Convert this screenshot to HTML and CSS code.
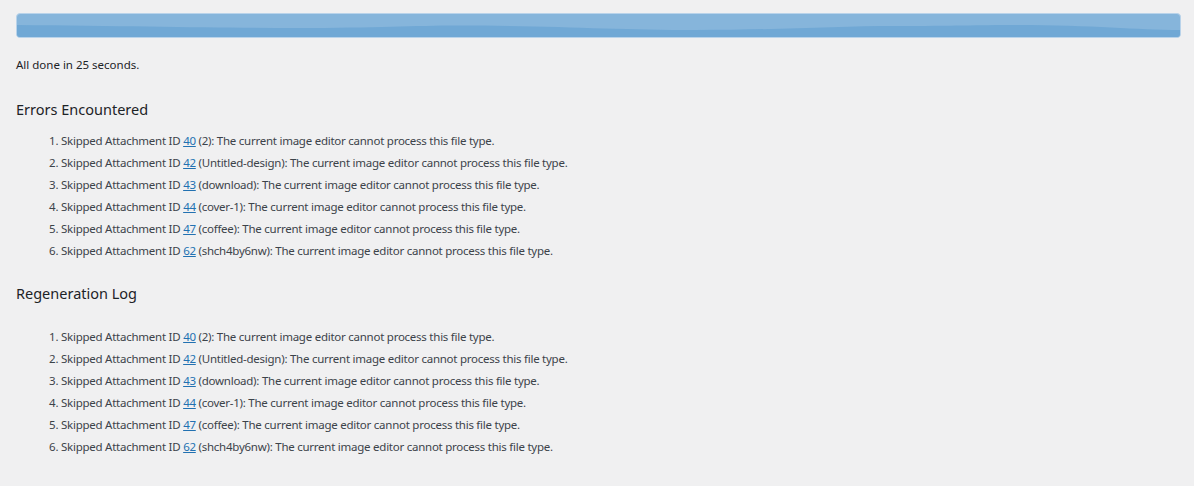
FILE: index.html
```html
<!DOCTYPE html>
<html lang="en">

<head>
    <meta charset="UTF-8">
    <meta name="viewport" content="width=device-width, initial-scale=1.0">
    <title>Regenerate Thumbnails</title>

    <link rel="stylesheet" href="styles.css">
</head>

<body>

    <div class="wrap">
        <div class="progressbar">
            <svg class="wave" viewBox="0 0 1165 23" preserveAspectRatio="none">
                <path d="M0,11 C120,12 200,14 280,14 C360,14 400,11.5 440,11.5 C540,11.5 600,16 680,16 C760,16 820,12 880,12 C940,12 960,11 1000,11 C1080,11 1120,16 1165,16 L1165,23 L0,23 Z" fill="#70a8d5" />
            </svg>
        </div>

        <p class="done">All done in 25 seconds.</p>

        <h2 class="title">Errors Encountered</h2>
        <ol class="log">
            <li>Skipped Attachment ID <a href="#">40</a> (2): The current image editor cannot process this file type.</li>
            <li>Skipped Attachment ID <a href="#">42</a> (Untitled-design): The current image editor cannot process this file type.</li>
            <li>Skipped Attachment ID <a href="#">43</a> (download): The current image editor cannot process this file type.</li>
            <li>Skipped Attachment ID <a href="#">44</a> (cover-1): The current image editor cannot process this file type.</li>
            <li>Skipped Attachment ID <a href="#">47</a> (coffee): The current image editor cannot process this file type.</li>
            <li>Skipped Attachment ID <a href="#">62</a> (shch4by6nw): The current image editor cannot process this file type.</li>
        </ol>

        <h2 class="title title-log">Regeneration Log</h2>
        <ol class="log log-full">
            <li>Skipped Attachment ID <a href="#">40</a> (2): The current image editor cannot process this file type.</li>
            <li>Skipped Attachment ID <a href="#">42</a> (Untitled-design): The current image editor cannot process this file type.</li>
            <li>Skipped Attachment ID <a href="#">43</a> (download): The current image editor cannot process this file type.</li>
            <li>Skipped Attachment ID <a href="#">44</a> (cover-1): The current image editor cannot process this file type.</li>
            <li>Skipped Attachment ID <a href="#">47</a> (coffee): The current image editor cannot process this file type.</li>
            <li>Skipped Attachment ID <a href="#">62</a> (shch4by6nw): The current image editor cannot process this file type.</li>
        </ol>
    </div>

</body>

</html>
```

FILE: styles.css
```css
body {
    margin: 0;
    background: #f0f0f1;
    color: #3c434a;
    font-family: "Noto Sans", "Open Sans", sans-serif;
    font-size: 11.5px;
    letter-spacing: -0.25px;
}

.wrap {
    padding: 13px 13px 0 16px;
}

.progressbar {
    position: relative;
    height: 23px;
    background: #86b5db;
    border: 1px solid #b9d3ea;
    border-radius: 4px;
    overflow: hidden;
}

.wave {
    position: absolute;
    left: 0;
    top: 0;
    width: 100%;
    height: 100%;
}

.done {
    margin: 18px 0 0;
    color: #1d2327;
    line-height: 18px;
    letter-spacing: 0;
}

.title {
    margin: 25px 0 0;
    font-size: 14.5px;
    font-weight: 400;
    letter-spacing: 0;
    color: #1d2327;
    line-height: 20px;
}

.title-log {
    margin-top: 23px;
}

.log {
    margin: 13px 0 0;
    padding-left: 45px;
}

.log li {
    line-height: 18px;
    margin-bottom: 4px;
}

.log-full {
    margin-top: 25px;
}

.log a {
    color: #2271b1;
    text-decoration: underline;
}
```
